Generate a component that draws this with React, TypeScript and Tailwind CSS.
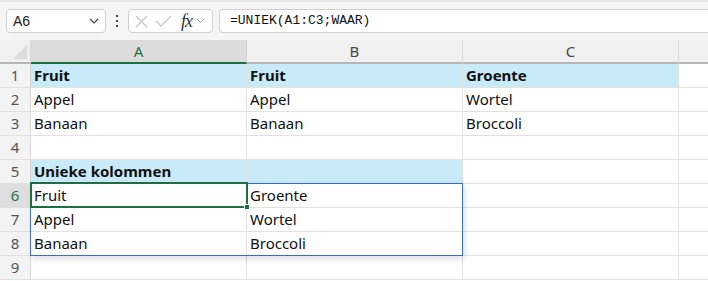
import React from 'react';

type Cell = { text?: string; bold?: boolean; fill?: boolean };

const rows: Cell[][] = [
    [{ text: 'Fruit', bold: true, fill: true }, { text: 'Fruit', bold: true, fill: true }, { text: 'Groente', bold: true, fill: true }],
    [{ text: 'Appel' }, { text: 'Appel' }, { text: 'Wortel' }],
    [{ text: 'Banaan' }, { text: 'Banaan' }, { text: 'Broccoli' }],
    [{}, {}, {}],
    [{ text: 'Unieke kolommen', bold: true, fill: true }, { fill: true }, {}],
    [{ text: 'Fruit' }, { text: 'Groente' }, {}],
    [{ text: 'Appel' }, { text: 'Wortel' }, {}],
    [{ text: 'Banaan' }, { text: 'Broccoli' }, {}],
    [{}, {}, {}],
];

const FormulaBar = () => (
    <div className="h-[40px] bg-[#f5f5f5] border-t-2 border-[#e9e9e9] flex items-center pl-[6px]">
        <div className="w-[100px] h-[24px] bg-white border border-[#d1d1d1] rounded-[4px] flex items-center justify-between pl-[6px] pr-[6px]">
            <span className="text-[14px] text-[#222]" style={{ fontFamily: '"Liberation Sans", Arial, sans-serif' }}>A6</span>
            <svg width="10" height="6" viewBox="0 0 10 6" fill="none" stroke="#444" strokeWidth="1.2">
                <path d="M1 1 L5 5 L9 1" />
            </svg>
        </div>
        <div className="w-[22px] flex flex-col items-center gap-[3px]">
            <div className="w-[2px] h-[2px] bg-[#444]" />
            <div className="w-[2px] h-[2px] bg-[#444]" />
            <div className="w-[2px] h-[2px] bg-[#444]" />
        </div>
        <div className="w-[85px] h-[24px] bg-white border border-[#d1d1d1] rounded-[4px] flex items-center pl-[6px] gap-[7px]">
            <svg width="13" height="13" viewBox="0 0 13 13" stroke="#c4c4c4" strokeWidth="1.1" fill="none">
                <path d="M1 1 L12 12 M12 1 L1 12" />
            </svg>
            <svg width="17" height="12" viewBox="0 0 17 12" stroke="#c4c4c4" strokeWidth="1.1" fill="none">
                <path d="M1 6 L6 11 L16 1" />
            </svg>
            <span className="ml-[2px] italic text-[18px] text-[#333] leading-none tracking-[-1px]" style={{ fontFamily: '"Liberation Serif", "Times New Roman", serif' }}>fx</span>
            <svg className="-ml-[3px]" width="9" height="6" viewBox="0 0 9 6" fill="none" stroke="#999" strokeWidth="1">
                <path d="M1 1 L4.5 4.5 L8 1" />
            </svg>
        </div>
        <div className="ml-[6px] flex-1 h-[24px] bg-white border border-r-0 border-[#d1d1d1] rounded-l-[4px] flex items-center pl-[10px]">
            <span className="text-[13px] text-[#111]" style={{ fontFamily: '"Liberation Mono", "Courier New", monospace' }}>=UNIEK(A1:C3;WAAR)</span>
        </div>
    </div>
);

const HeaderRow = () => (
    <div className="flex h-[24px]">
        <div className="w-[31px] h-full bg-[#f0f0f0] border-r border-b-2 border-r-[#dadada] border-b-[#b6b6b6] relative">
            <svg className="absolute right-[3px] bottom-[3px]" width="14" height="14" viewBox="0 0 14 14">
                <path d="M14 0 L14 14 L0 14 Z" fill="#dcdcdc" />
            </svg>
        </div>
        <div className="w-[216px] h-full bg-[#dcdcdc] border-r border-b-2 border-r-[#cfcfcf] border-b-[#1f6e43] flex items-center justify-center text-[15px] text-[#1f6e43]">A</div>
        <div className="w-[216px] h-full bg-[#f0f0f0] border-r border-b-2 border-r-[#dadada] border-b-[#b6b6b6] flex items-center justify-center text-[15px] text-[#444]">B</div>
        <div className="w-[216px] h-full bg-[#f0f0f0] border-r border-b-2 border-r-[#dadada] border-b-[#b6b6b6] flex items-center justify-center text-[15px] text-[#444]">C</div>
        <div className="flex-1 h-full bg-[#f0f0f0] border-b-2 border-b-[#b6b6b6]" />
    </div>
);

export default function App() {
    return (
        <div className="w-[708px] h-[281px] overflow-hidden bg-white relative" style={{ fontFamily: '"Noto Sans", "Open Sans", sans-serif' }}>
            <FormulaBar />
            <HeaderRow />
            {rows.map((r, i) => {
                const active = i === 5;
                return (
                    <div key={i} className="flex h-[24px]">
                        <div className={`w-[31px] h-full border-r border-b border-r-[#d4d4d4] border-b-[#e1e1e1] flex items-center justify-center text-[15px] ${active ? 'bg-[#dedede] text-[#1f6e43]' : 'bg-[#f3f3f3] text-[#555]'}`}>
                            {i + 1}
                        </div>
                        {r.map((c, j) => (
                            <div
                                key={j}
                                className={`w-[216px] h-full border-r border-b border-[#e1e1e1] flex items-center pl-[3px] text-[15px] text-[#111] whitespace-nowrap ${c.fill ? 'bg-[#c9eaf9]' : 'bg-white'} ${c.bold ? 'font-bold' : ''}`}
                            >
                                {c.text}
                            </div>
                        ))}
                        <div className="flex-1 h-full border-b border-[#e1e1e1]" />
                    </div>
                );
            })}
            {/* spill range A6:B8 */}
            <div className="absolute left-[30px] top-[183px] w-[433px] h-[73px] border border-[#3b6cc3] shadow-[2px_3px_6px_rgba(0,0,0,0.12)] pointer-events-none" />
            {/* active cell A6 */}
            <div className="absolute left-[30px] top-[182px] w-[218px] h-[26px] border-2 border-[#1f6e43] pointer-events-none" />
            <div className="absolute left-[244px] top-[204px] w-[6px] h-[6px] bg-[#1f6e43] border border-white pointer-events-none" />
        </div>
    );
}
